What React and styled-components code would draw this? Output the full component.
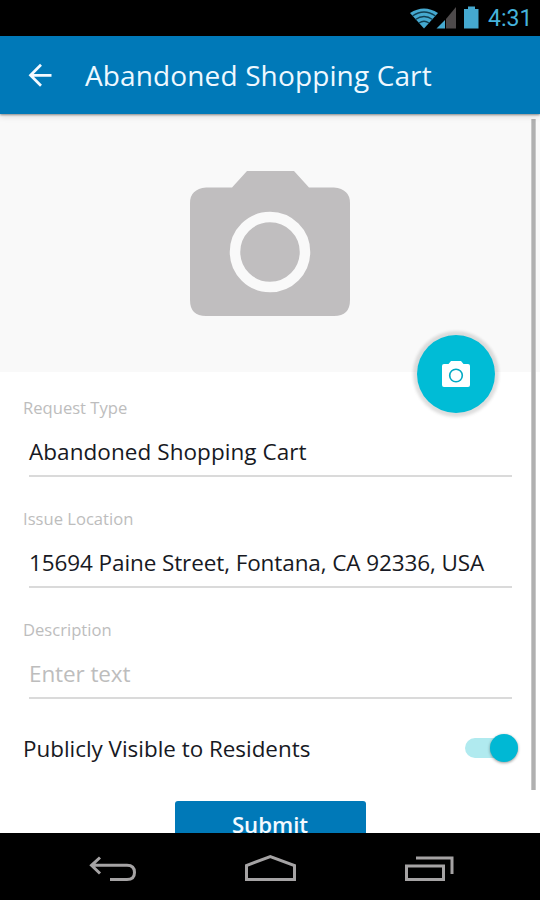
import React from 'react';
import styled, { createGlobalStyle } from 'styled-components';

const GlobalStyle = createGlobalStyle`
  body {
    margin: 0;
    background: #fff;
    font-family: "Open Sans", "Noto Sans", sans-serif;
  }
  * {
    box-sizing: border-box;
  }
`;

const Screen = styled.div`
  width: 540px;
  height: 900px;
  display: flex;
  flex-direction: column;
  overflow: hidden;
  background: #fff;
`;

const StatusBar = styled.div`
  height: 36px;
  flex: none;
  display: flex;
  justify-content: flex-end;
  padding-right: 10px;
  background: #000;
`;

const StatusIcons = styled.svg`
  width: 78px;
  height: 36px;
`;

const Clock = styled.span`
  width: 42px;
  color: #45b3dc;
  font-family: Roboto, sans-serif;
  font-size: 23px;
  line-height: 38px;
  white-space: nowrap;
  text-align: right;
`;

const Header = styled.header`
  position: relative;
  z-index: 1;
  height: 78px;
  flex: none;
  display: flex;
  align-items: center;
  padding-left: 28px;
  background: #0079b8;
  box-shadow: 0 1px 2px rgba(0, 0, 0, 0.4), 0 3px 6px rgba(0, 0, 0, 0.1);
`;

const BackIcon = styled.svg`
  width: 24px;
  height: 24px;
`;

const Title = styled.h1`
  margin: 0 0 0 33px;
  color: #eef8ff;
  font-size: 28px;
  font-weight: 400;
  line-height: 38px;
  letter-spacing: 0.13px;
  white-space: nowrap;
`;

const Content = styled.main`
  position: relative;
  flex: 1;
  min-height: 0;
  overflow: hidden;
`;

const ScrollThumb = styled.div`
  position: absolute;
  top: 5px;
  right: 4px;
  width: 5px;
  height: 671px;
  background: #b0b0b0;
  border: solid #c8c8c8;
  border-width: 0 1px;
`;

const Photo = styled.div`
  position: relative;
  height: 258px;
  padding-top: 57px;
  display: flex;
  justify-content: center;
  align-items: flex-start;
  background: #f9f9f9;
`;

const CameraButton = styled.button`
  position: absolute;
  right: 45px;
  bottom: -41px;
  width: 78px;
  height: 78px;
  padding: 0;
  display: flex;
  align-items: center;
  justify-content: center;
  border: 0;
  border-radius: 50%;
  background: #00bcd6;
  box-shadow: 0 0 3px 4px rgba(0, 0, 0, 0.1), 0 1px 5px 3px rgba(0, 0, 0, 0.04);
`;

const Form = styled.div`
  padding: 24px 23px 0;
`;

const Field = styled.div`
  height: 111px;
`;

const Label = styled.div`
  height: 24px;
  color: #bdbdbd;
  font-size: 16.6px;
  line-height: 24px;
`;

const Value = styled.div`
  height: 57px;
  margin: 0 5px 0 6px;
  padding-top: 8px;
  border-bottom: 2px solid #dadada;
  color: ${(props) => (props.$placeholder ? '#bdbdbd' : '#171923')};
  font-size: 22.5px;
  line-height: 48px;
  letter-spacing: ${(props) => props.$spacing}px;
  white-space: nowrap;
`;

const ToggleRow = styled.div`
  height: 38px;
  display: flex;
  align-items: center;
  justify-content: space-between;
  color: #171923;
  font-size: 22.4px;
  white-space: nowrap;
`;

const Track = styled.div`
  width: 53px;
  height: 20px;
  margin-right: -1px;
  display: flex;
  align-items: center;
  justify-content: flex-end;
  border-radius: 10px;
  background: #b0eaef;
`;

const Knob = styled.div`
  width: 28px;
  height: 28px;
  flex: none;
  border-radius: 50%;
  background: #00b8d4;
  box-shadow: 0 1px 3px rgba(0, 0, 0, 0.4);
`;

const SubmitButton = styled.button`
  display: block;
  width: 191px;
  height: 54px;
  margin: 34px auto 0;
  padding: 0 0 6px;
  border: 0;
  border-radius: 3px;
  background: #0079b8;
  color: #f4faff;
  font-family: inherit;
  font-size: 22.2px;
  font-weight: 600;
  line-height: 30px;
`;

const NavBar = styled.nav`
  height: 67px;
  flex: none;
  background: #000;
`;

const NavIcons = styled.svg`
  display: block;
  width: 540px;
  height: 67px;
`;

const Camera = () => (
  <svg width="160" height="145" viewBox="0 0 160 145">
    <path
      fill="#c0bebf"
      d="M57 0H104L119 16.500H144Q160 18 160 32V129Q160 145 144 145H16Q0 145 0 129V32Q0 18 16 16.500H42Z"
    />
    <circle cx="80" cy="81" r="35" fill="none" stroke="#f9f9f9" strokeWidth="10.500" />
  </svg>
);

const SmallCamera = () => (
  <svg width="28" height="28" viewBox="0 0 28 28">
    <path fill="#fff" d="M9 1H19L21.500 4H26Q28 4 28 6V25Q28 27 26 27H2Q0 27 0 25V6Q0 4 2 4H6.500Z" />
    <circle cx="14" cy="15.500" r="6.300" fill="none" stroke="#00a9c4" strokeWidth="1.600" />
  </svg>
);

const fields = [
  { label: 'Request Type', value: 'Abandoned Shopping Cart', spacing: 0.06 },
  { label: 'Issue Location', value: '15694 Paine Street, Fontana, CA 92336, USA', spacing: -0.1 },
  { label: 'Description', value: 'Enter text', spacing: -0.1, placeholder: true },
];

const App = () => (
  <Screen>
    <GlobalStyle />
    <StatusBar>
      <StatusIcons viewBox="410 0 78 36">
        <path fill="#45a9d0" d="M410 13Q424 4 438 13L424 28.500Z" />
        <path
          fill="none"
          stroke="#123f52"
          strokeWidth="1.300"
          d="M412.500 16Q424 8 435.500 16M415.500 19.500Q424 13.500 432.500 19.500M419 23Q424 19.500 429 23"
        />
        <path fill="#4e4a4b" d="M456 7V28.500H446V19Z" />
        <path fill="#45a9d0" d="M445 20V28.500H436.500Z" />
        <path fill="#45a9d0" d="M468 6.500H475V9H478.500V28.500H464V9H468Z" />
      </StatusIcons>
      <Clock>4:31</Clock>
    </StatusBar>
    <Header>
      <BackIcon viewBox="0 0 24 24">
        <path fill="none" stroke="#f4faff" strokeWidth="2.700" d="M23.500 12.300H2.500M13 1.800L2.500 12.300L13 22.800" />
      </BackIcon>
      <Title>Abandoned Shopping Cart</Title>
    </Header>
    <Content>
      <Photo>
        <Camera />
        <CameraButton>
          <SmallCamera />
        </CameraButton>
      </Photo>
      <Form>
        {fields.map((field) => (
          <Field key={field.label}>
            <Label>{field.label}</Label>
            <Value $placeholder={field.placeholder} $spacing={field.spacing}>
              {field.value}
            </Value>
          </Field>
        ))}
        <ToggleRow>
          <span>Publicly Visible to Residents</span>
          <Track>
            <Knob />
          </Track>
        </ToggleRow>
        <SubmitButton>Submit</SubmitButton>
      </Form>
      <ScrollThumb />
    </Content>
    <NavBar>
      <NavIcons viewBox="0 833 540 67">
        <g fill="none" stroke="#a5a3a4" strokeWidth="3">
          <path d="M100 857.500L91.500 865.300L100 873.500M92 865.300H127Q134.500 865.300 134.500 872.500Q134.500 879.500 127 879.500H110" />
          <path d="M246.500 879.500V865.500L270.300 856.500L294.500 865.500V879.500Z" />
          <path d="M406.500 866H443.500V879.500H406.500ZM416 858H452V874" />
        </g>
      </NavIcons>
    </NavBar>
  </Screen>
);

export default App;
